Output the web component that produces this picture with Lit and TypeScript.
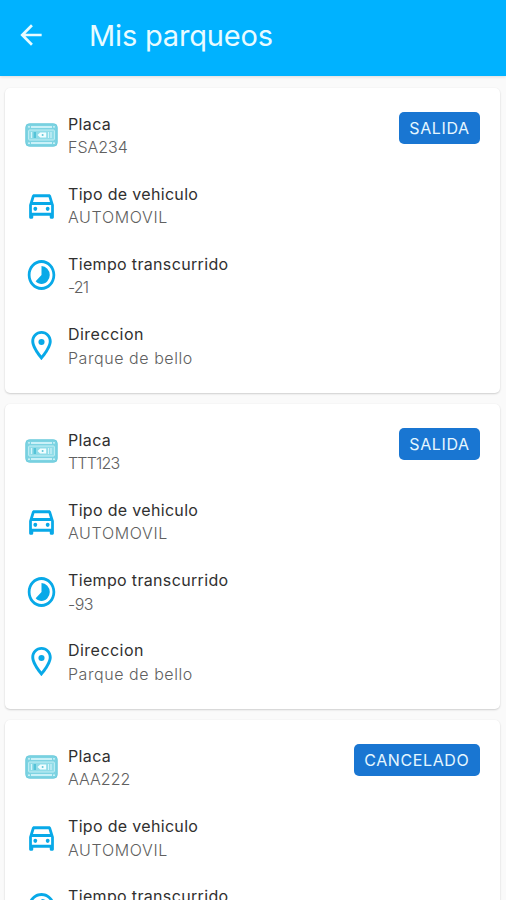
import { LitElement, html, css, svg } from "lit";
import { customElement, property } from "lit/decorators.js";
import { styleMap } from "lit/directives/style-map.js";

type IconName = "plate" | "car" | "time" | "pin";
interface Parking { plate: string; vehicle: string; elapsed: string; address: string; action: string; }

const TRACKING: Record<string, number> = {
  "Mis parqueos": -0.17,
  "Placa": 0.35,
  "Tipo de vehiculo": 0.32,
  "Tiempo transcurrido": 0.34,
  "Direccion": 0.47,
  "AUTOMOVIL": 0.65,
  "Parque de bello": 0.56,
  "-21": -0.9,
  "-93": -0.6,
  "TTT123": -0.85,
  "SALIDA": 0.6,
  "CANCELADO": 0.6,
};

const icons = {
  plate: svg`<svg width="33" height="24" viewBox="0 0 33 24">
    <rect x=".8" y=".8" width="31.4" height="22.4" rx="3.5" fill="#7dd3e2" stroke="#6ccbdc" stroke-width="1"/>
    <path d="M6 4H27M6 20H27" stroke="#e4fbff" stroke-width="1.5"/>
    <rect x="3.6" y="7" width="25.8" height="10" rx="1" fill="#90dce8" stroke="#c4eff5" stroke-width="1"/>
    <path d="M6.5 9v6M23.5 9v6M26 9v6" stroke="#d3f5fa" stroke-width="1.1"/>
    <path d="M8.6 9h2.4v6H8.6z" fill="#55c3d8"/>
    <path d="M12.5 12l2.7-2.6h6v5.2h-6z" fill="#f2feff"/>
    <circle cx="17.6" cy="12" r="1" fill="#62c8da"/>
    <circle cx="4" cy="3.8" r=".9" fill="#dcf8fb"/><circle cx="29" cy="3.8" r=".9" fill="#dcf8fb"/>
    <circle cx="4" cy="20.2" r=".9" fill="#dcf8fb"/><circle cx="29" cy="20.2" r=".9" fill="#dcf8fb"/></svg>`,
  car: svg`<svg class="car" width="33" height="37" viewBox="0 0 24 24" preserveAspectRatio="none" fill="#08a9e8">
    <path d="M18.92 5.01C18.72 4.42 18.16 4 17.5 4h-11c-.66 0-1.21.42-1.42 1.01L3 11v8c0 .55.45 1 1 1h1c.55 0 1-.45 1-1v-1h12v1c0 .55.45 1 1 1h1c.55 0 1-.45 1-1v-8l-2.08-5.99zM6.85 6h10.29l1.04 3H5.81l1.04-3zM19 16H5v-5h14v5z"/>
    <circle cx="7.5" cy="13.5" r="1.4"/><circle cx="16.5" cy="13.5" r="1.4"/></svg>`,
  time: svg`<svg width="33" height="36" viewBox="0 0 24 24" preserveAspectRatio="none" fill="#08a9e8">
    <path d="M16.24 7.76A5.974 5.974 0 0 0 12 6v6l-4.24 4.24c2.34 2.34 6.14 2.34 8.49 0a5.99 5.99 0 0 0-.01-8.48zM12 2C6.48 2 2 6.48 2 12s4.48 10 10 10 10-4.48 10-10S17.52 2 12 2zm0 18c-4.42 0-8-3.58-8-8s3.58-8 8-8 8 3.58 8 8-3.58 8-8 8z"/></svg>`,
  pin: svg`<svg width="35" height="35" viewBox="0 0 24 24" preserveAspectRatio="none" fill="#08a9e8">
    <path d="M12 2C8.13 2 5 5.13 5 9c0 5.25 7 13 7 13s7-7.75 7-13c0-3.87-3.13-7-7-7zM7 9c0-2.76 2.24-5 5-5s5 2.24 5 5c0 2.88-2.88 7.19-5 9.88C9.92 16.21 7 11.85 7 9z"/>
    <circle cx="12" cy="9.6" r="2.1"/></svg>`,
};

const track = (text: string) => styleMap({ letterSpacing: `${TRACKING[text] ?? 0}px` });

@customElement("detail-row")
export class DetailRow extends LitElement {
  @property() icon: IconName = "plate";
  @property() label = "";
  @property() value = "";

  static styles = css`
    :host { display: flex; align-items: center; height: 46.8px; }
    .icon { display: flex; justify-content: center; align-items: center; width: 35px; margin: -2px 9.5px 0 18.5px; }
    .label, .value { font-size: 16px; line-height: 23.4px; height: 23.4px; white-space: nowrap; }
    .label { color: #303030; }
    .value { color: #606060; font-weight: 300; }
    svg { display: block; flex: none; }
    .car { margin-top: 2px; }
  `;

  render() {
    return html`<div class="icon">${icons[this.icon]}</div>
      <div>
        <div class="label"><span style=${track(this.label)}>${this.label}</span></div>
        <div class="value"><span style=${track(this.value)}>${this.value}</span></div>
      </div>`;
  }
}

@customElement("parking-card")
export class ParkingCard extends LitElement {
  @property({ attribute: false }) parking!: Parking;

  static styles = css`
    :host {
      display: flex; justify-content: space-between; align-items: flex-start;
      box-sizing: border-box; height: 304.6px; padding: 24.6px 20px 0 0; flex: none;
      background: #fff; border-radius: 5px;
      box-shadow: 0 1px 2px rgba(0, 0, 0, .17), 0 0 2px rgba(0, 0, 0, .03);
    }
    .rows { display: flex; flex-direction: column; gap: 23.4px; }
    button {
      height: 32px; padding: 0; border: 0; border-radius: 5px; background: #1976d2; margin-top: -.6px;
      color: #e6f7ff; font: 400 16px/32px Inter, sans-serif; width: 81px; white-space: nowrap;
    }
    .wide { width: 126.5px; }
  `;

  render() {
    const p = this.parking;
    return html`<div class="rows">
        <detail-row icon="plate" label="Placa" .value=${p.plate}></detail-row>
        <detail-row icon="car" label="Tipo de vehiculo" .value=${p.vehicle}></detail-row>
        <detail-row icon="time" label="Tiempo transcurrido" .value=${p.elapsed}></detail-row>
        <detail-row icon="pin" label="Direccion" .value=${p.address}></detail-row>
      </div>
      <button class=${p.action === "CANCELADO" ? "wide" : ""}><span style=${track(p.action)}>${p.action}</span></button>`;
  }
}

@customElement("app-root")
export class AppRoot extends LitElement {
  private parkings: Parking[] = [
    { plate: "FSA234", vehicle: "AUTOMOVIL", elapsed: "-21", address: "Parque de bello", action: "SALIDA" },
    { plate: "TTT123", vehicle: "AUTOMOVIL", elapsed: "-93", address: "Parque de bello", action: "SALIDA" },
    { plate: "AAA222", vehicle: "AUTOMOVIL", elapsed: "", address: "", action: "CANCELADO" },
  ];

  static styles = css`
    :host { display: flex; flex-direction: column; height: 900px; overflow: hidden; background: #fafafa; font-family: Inter, sans-serif; }
    header {
      display: flex; align-items: center; height: 76px; flex: none; box-sizing: border-box; padding: 0 0 6px 15px;
      background: #00b2ff; color: #e8fbff; box-shadow: 0 1px 3px rgba(0, 0, 0, .12);
    }
    h1 { margin: 2px 0 0 42px; font-size: 29px; line-height: 36px; font-weight: 400; white-space: nowrap; }
    main { display: flex; flex-direction: column; gap: 11.6px; padding: 12px 6px 0 5px; }
  `;

  render() {
    return html`<header>
        <svg width="32" height="34" viewBox="0 0 24 24" fill="#e8fbff"><path d="M20 11H7.83l5.59-5.59L12 4l-8 8 8 8 1.41-1.41L7.83 13H20v-2z"/></svg>
        <h1><span style=${track("Mis parqueos")}>Mis parqueos</span></h1>
      </header>
      <main>${this.parkings.map((p) => html`<parking-card .parking=${p}></parking-card>`)}</main>`;
  }
}
